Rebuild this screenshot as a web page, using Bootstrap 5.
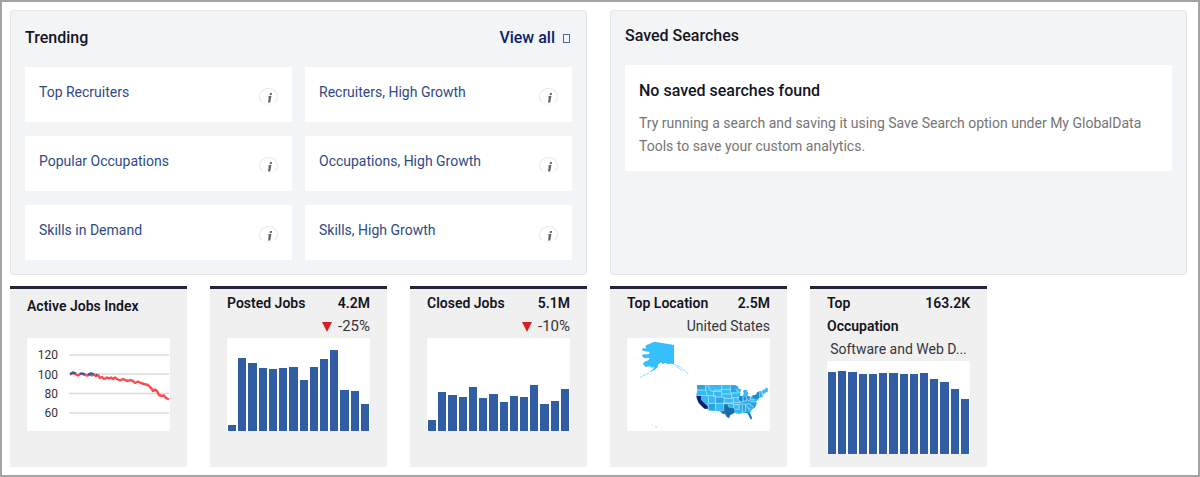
<!DOCTYPE html>
<html lang="en">
<head>
<meta charset="utf-8">
<meta name="viewport" content="width=device-width, initial-scale=1">
<title>Jobs dashboard</title>
<link href="https://cdn.jsdelivr.net/npm/bootstrap@5.3.0/dist/css/bootstrap.min.css" rel="stylesheet">
<style>
  body { font-family: Roboto, "Liberation Sans", sans-serif; font-size: 14px; color: #14151f; background: #fff; }
  .frame { min-height: 100vh; border: 2px solid #a3a3a3; padding: 8px 11px 8px 8px; }
  .panels { display: grid; grid-template-columns: 1fr 1fr; gap: 23px; margin-bottom: 11px; }
  .stats { display: grid; grid-template-columns: repeat(6, 1fr); gap: 23px; }
  .panel { background: #f3f4f6; border: 1px solid #e4e5e7; border-radius: 3px; padding: 14px; }
  .panel-title { font-size: 16px; font-weight: 500; line-height: 24px; margin: 0; }
  .panel-head { padding-top: 1px; margin-bottom: 17px; }
  .saved .panel-title.top { line-height: 22px; margin-bottom: 18px; }
  .view-all { font-size: 16px; font-weight: 500; line-height: 24px; color: #0a1f6b; text-decoration: none; padding-right: 2px; }
  .view-all i { width: 7px; height: 9px; border: 1px solid #4d66a0; }
  .tiles { display: grid; grid-template-columns: 1fr 1fr; gap: 14px 13px; }
  .tile { background: #fff; height: 55px; padding: 14px; }
  .tile a { color: #2f4a85; text-decoration: none; line-height: 22px; }
  .info { width: 19px; height: 17px; margin-top: 7px; padding: 0; border: 1px solid #e9e9e9; border-bottom-color: #f8f8f8; border-radius: 50%; background: none; }
  .info svg { display: block; margin: 2px auto 0 7px; }
  .empty { background: #fff; padding: 14px 14px 13px; }
  .empty p { color: #757575; line-height: 23px; margin: 9px 0 0; }
  .stat { background: #f0f0f0; border-top: 3px solid #25253d; padding: 3px 17px 13px; min-height: 181px; line-height: 23px; }
  .stat h3 { font-size: 14px; font-weight: 600; line-height: 23px; margin: 0; }
  .stat h3.lone { padding: 3px 0 20px; }
  .figure-num { font-weight: 600; }
  .sub { color: #34353c; }
  .change { font-size: 15px; gap: 6px; }
  .chart { background: #fff; height: 93px; }
  .bars { display: flex; align-items: flex-end; gap: 2px; padding: 0 1px; }
  .bars > i { flex: 1 1 0; background: #305da4; }
  .axis { font-size: 12px; fill: #333; }
</style>
</head>
<body>
<main class="frame">
  <div class="panels">
    <section class="panel">
      <div class="panel-head d-flex justify-content-between">
        <h2 class="panel-title">Trending</h2>
        <a class="view-all d-flex align-items-center gap-2" href="#">View all <i aria-hidden="true"></i></a>
      </div>
      <div class="tiles" id="tiles">
        <div class="tile d-flex justify-content-between align-items-start"><a href="#">Top Recruiters</a></div>
        <div class="tile d-flex justify-content-between align-items-start"><a href="#">Recruiters, High Growth</a></div>
        <div class="tile d-flex justify-content-between align-items-start"><a href="#">Popular Occupations</a></div>
        <div class="tile d-flex justify-content-between align-items-start"><a href="#">Occupations, High Growth</a></div>
        <div class="tile d-flex justify-content-between align-items-start"><a href="#">Skills in Demand</a></div>
        <div class="tile d-flex justify-content-between align-items-start"><a href="#">Skills, High Growth</a></div>
      </div>
    </section>
    <section class="panel saved">
      <h2 class="panel-title top">Saved Searches</h2>
      <div class="empty">
        <h3 class="panel-title">No saved searches found</h3>
        <p>Try running a search and saving it using Save Search option under My GlobalData Tools to save your custom analytics.</p>
      </div>
    </section>
  </div>

  <div class="stats">
    <section class="stat">
      <h3 class="lone">Active Jobs Index</h3>
      <svg class="chart d-block w-100" viewBox="0 0 143 93" role="img" aria-label="Active jobs index over time">
        <g stroke="#dcdcdc" stroke-width="1.5"><path d="M42 17H142M42 36H142M42 55.500H142M42 75H142"/></g>
        <g class="axis" text-anchor="end"><text x="31" y="21">120</text><text x="31" y="41">100</text><text x="31" y="60">80</text><text x="31" y="79">60</text></g>
        <path fill="none" stroke="#fb4d4f" stroke-width="2.4" stroke-linejoin="round" d="M43 36.500L47 35L49 36.500L51 37.500L54 35.500L60 37.500L63 36.500L65 37.500L67 36.500L69 38L71 37L73 40L75 39L77 41L80 39.500L82 40.500L84 39.500L86 41L88 39.500L90 41L93 42.500L96 41L98 42L101 43L103 42L106 43L108 45L111 43.500L114 45L117 46L121 47L124 50L126 53L128 51.500L130 53L132 57L135 58L137 57.500L139 60L142 61.500"/>
        <path fill="none" stroke="#305da4" stroke-width="2.2" d="M43 36L46 34.500L49 35.500M53 36L55 35.500L58 36M61 36.500L64 35.500L67 36M69 36.500L70 37"/>
      </svg>
    </section>
    <section class="stat">
      <div class="d-flex justify-content-between"><h3>Posted Jobs</h3><span class="figure-num">4.2M</span></div>
      <div class="sub change d-flex justify-content-end align-items-center"><svg width="10" height="10" viewBox="0 0 10 10" aria-hidden="true"><path d="M0 0H10L5 10Z" fill="#d91f1f"/></svg><span>-25%</span></div>
      <div class="chart bars" data-values="6,73,68,63,62,63,64,51,64,72,81,41,40,27"></div>
    </section>
    <section class="stat">
      <div class="d-flex justify-content-between"><h3>Closed Jobs</h3><span class="figure-num">5.1M</span></div>
      <div class="sub change d-flex justify-content-end align-items-center"><svg width="10" height="10" viewBox="0 0 10 10" aria-hidden="true"><path d="M0 0H10L5 10Z" fill="#d91f1f"/></svg><span>-10%</span></div>
      <div class="chart bars" data-values="11,39,36,34,44,33,37,29,35,34,46,27,30,42"></div>
    </section>
    <section class="stat">
      <div class="d-flex justify-content-between"><h3>Top Location</h3><span class="figure-num">2.5M</span></div>
      <div class="sub text-end">United States</div>
      <svg class="chart d-block w-100" viewBox="6 9 429 279" role="img" aria-label="Jobs by state, United States">
        <!-- Alaska -->
        <path fill="#35c0fd" d="M61 34L66 29L74 27L80 23L90 20L98 22L110 24L130 27L147 30V88L138 86L128 87L120 83L114 88L108 82L100 88L98 97L90 104L78 110L72 112L84 103L88 97L80 98L74 94L62 96L54 88L58 80L70 76L74 69L58 70L50 62L56 58L72 58L74 51L56 48L50 44L54 40L64 40Z"/>
        <path fill="none" stroke="#8cdafb" stroke-width="3" d="M147 88L157 92L166 96L175 104L182 108L190 117M152 94L163 100L172 108M72 113L60 119L50 124L43 128" stroke-dasharray="9 2"/>
        <!-- St. Lawrence Island and Hawaii -->
        <path fill="none" stroke="#c4edfd" stroke-width="2" d="M34 71H40M78 268L85 271"/>
        <path fill="none" stroke="#7fd6fb" stroke-width="3" d="M91 275L96 277"/>
        <!-- Contiguous states -->
        <path fill="#35baf4" d="M216 150L318 150L329 151L342 156L338 160L349 163L346 170L346 184L352 186L356 176L354 167L360 164L367 167L370 176L367 184L377 187L383 181L392 179L396 172L404 169L412 168L414 163L419 165L422 158L427 158L430 169L420 174L414 180L415 185L404 188L399 194L393 198L395 207L391 216L382 222L377 231L375 235L381 249L378 253L371 239L369 234L352 234L343 237L332 235L325 233L315 241L313 249L306 246L300 236L294 238L287 229L273 228L262 227L250 226L242 219L226 203L219 194L214 180L218 162Z"/>
        <path fill="#2aa4e4" d="M250 206H270V226H253ZM273 188H297V203H273ZM318 151H333L339 160L332 172H318ZM216 151H240V164H217ZM347 200L372 198L369 234L361 229L347 226ZM373 196L395 200L391 216L382 222L370 210Z"/>
        <path fill="#1f88cc" d="M342 183L352 183L355 190L351 202L345 199L340 191ZM384 181L397 179V173L404 169L407 185L399 190L383 189ZM356 186H363V197H355ZM365 184H375V195H364ZM389 190L398 190L395 197L386 195Z"/>
        <g fill="none" stroke="#c8edff" stroke-width="2">
          <path d="M214 165L241 165M214 182L270 182M242 150V165L245 175L247 182M249 151L252 159L258 168L266 169V184H271V204M266 165H290M290 151V185M290 163H316M290 177H317M265 169H290M316 151V172L320 177V189M271 186H297V204M250 184V205H324M249 205L249 226M272 205V228M297 190H325M297 204H325M296 205V211M318 174H340M322 188H343M332 161L337 169L344 173M342 184L337 190L346 202H326M325 190V208L328 226M327 209H342M342 205V223H332M346 207H378M346 202L364 197L371 190M354 186V200M364 184V196M375 184V195L368 200M376 195L394 194M377 200L396 201M352 208V233M362 208V231M363 210L374 226M374 209L386 216M404 170V188M412 169V183"/>
        </g>
        <path fill="#07206c" stroke="#e9f7ff" stroke-width="1" d="M213 182H229V195L249 214V222L239 222L232 216L220 203L216 193Z"/>
        <path fill="#1c69ae" stroke="#c8edff" stroke-width="1" d="M297 207H309V215L318 218L326 218L330 228L327 235L315 241L313 250L305 246L300 236L295 238L284 228H297Z"/>
        <path fill="#1d76ba" d="M357 232H372L376 237L381 249L378 254L372 244L368 235Z"/>
      </svg>
    </section>
    <section class="stat">
      <div class="d-flex justify-content-between"><h3>Top<br>Occupation</h3><span class="figure-num">163.2K</span></div>
      <div class="sub text-truncate text-center">Software and Web D...</div>
      <div class="chart bars" data-values="82,83,82,80,80,81,81,80,80,81,75,72,65,55"></div>
    </section>
  </div>
</main>
<script src="https://cdn.jsdelivr.net/npm/bootstrap@5.3.0/dist/js/bootstrap.bundle.min.js"></script>
<script>
  // One bar per value; heights are a share of the chart's own height.
  document.querySelectorAll('.bars').forEach(chart => {
    chart.dataset.values.split(',').forEach(v => {
      const bar = document.createElement('i');
      bar.style.height = (v / 93 * 100) + '%';
      chart.append(bar);
    });
  });
  // Every tile carries the same info button.
  document.querySelectorAll('.tile').forEach(tile => {
    const label = 'About ' + tile.textContent.trim();
    tile.insertAdjacentHTML('beforeend',
      `<button type="button" class="info flex-shrink-0" aria-label="${label}">
        <svg width="5" height="10" viewBox="0 0 5 10"><path d="M3 0H5L4.600 2H2.600ZM2 3H4.400L3.200 9.600H1L1.800 4.200H1Z" fill="#626262"/></svg>
      </button>`);
  });
</script>
</body>
</html>
